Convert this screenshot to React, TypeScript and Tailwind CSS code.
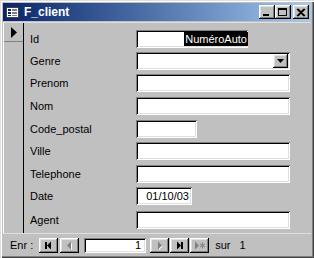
import React from 'react';

const raised =
  'bg-[#c0c0c0] shadow-[inset_-1px_-1px_0_#000,inset_1px_1px_0_#fff,inset_-2px_-2px_0_#808080,inset_2px_2px_0_#dfdfdf]';
const sunken =
  'bg-white shadow-[inset_1px_1px_0_#808080,inset_-1px_-1px_0_#fff,inset_2px_2px_0_#000,inset_-2px_-2px_0_#dfdfdf]';

function TitleButton({ kind }: { kind: 'min' | 'max' | 'close' }) {
  return (
    <div className={`w-[16px] h-[14px] flex items-center justify-center ${raised}`}>
      <svg width="10" height="9" viewBox="0 0 10 9">
        {kind === 'min' && <rect x="1" y="6" width="6" height="2" fill="#000" />}
        {kind === 'max' && (
          <>
            <rect x="0.5" y="0.5" width="8" height="7" fill="none" stroke="#000" />
            <rect x="0" y="0" width="9" height="2" fill="#000" />
          </>
        )}
        {kind === 'close' && (
          <path d="M1 1 L8 8 M8 1 L1 8 M2 1 L9 8 M9 1 L2 8" stroke="#000" strokeWidth="1.2" />
        )}
      </svg>
    </div>
  );
}

function NavButton({ icon, disabled }: { icon: 'first' | 'prev' | 'next' | 'last' | 'new'; disabled?: boolean }) {
  const c = disabled ? '#808080' : '#000';
  return (
    <div className={`w-[19px] h-[15px] flex items-center justify-center ${raised}`}>
      <svg width="13" height="9" viewBox="0 0 13 9">
        {disabled && icon === 'prev' && <path d="M8 1 L8 8 L4.5 4.5 Z" fill="#fff" transform="translate(1,1)" />}
        {disabled && icon === 'next' && <path d="M5 1 L5 8 L8.5 4.5 Z" fill="#fff" transform="translate(1,1)" />}
        {icon === 'first' && (
          <>
            <rect x="3" y="1" width="2" height="7" fill={c} />
            <path d="M9 0.5 L9 8.5 L5 4.5 Z" fill={c} />
          </>
        )}
        {icon === 'prev' && <path d="M8 0.5 L8 8.5 L4 4.5 Z" fill={c} />}
        {icon === 'next' && <path d="M5 0.5 L5 8.5 L9 4.5 Z" fill={c} />}
        {icon === 'last' && (
          <>
            <path d="M4 0.5 L4 8.5 L8 4.5 Z" fill={c} />
            <rect x="8" y="1" width="2" height="7" fill={c} />
          </>
        )}
        {icon === 'new' && (
          <>
            <path d="M2 0.5 L2 8.5 L6 4.5 Z" fill={c} />
            <path d="M9.5 1.5 L9.5 7.5 M7 3 L12 6 M12 3 L7 6" stroke={c} strokeWidth="1" />
          </>
        )}
      </svg>
    </div>
  );
}

const rows: { label: string; w: string; h: string; kind?: 'auto' | 'combo' | 'date' }[] = [
  { label: 'Id', w: 'w-[112px]', h: 'h-[22px]', kind: 'auto' },
  { label: 'Genre', w: 'w-[154px]', h: 'h-[22px]', kind: 'combo' },
  { label: 'Prenom', w: 'w-[154px]', h: 'h-[23px]' },
  { label: 'Nom', w: 'w-[154px]', h: 'h-[23px]' },
  { label: 'Code_postal', w: 'w-[61px]', h: 'h-[23px]' },
  { label: 'Ville', w: 'w-[154px]', h: 'h-[23px]' },
  { label: 'Telephone', w: 'w-[154px]', h: 'h-[22px]' },
  { label: 'Date', w: 'w-[56px]', h: 'h-[24px]', kind: 'date' },
  { label: 'Agent', w: 'w-[154px]', h: 'h-[22px]' },
];

export default function App() {
  return (
    <div className="w-[314px] h-[258px] bg-[#c0c0c0] p-[3px] flex flex-col text-black text-[11px] font-['Liberation_Sans',Arial,sans-serif] shadow-[inset_1px_1px_0_#dfdfdf,inset_2px_2px_0_#fff,inset_-1px_-1px_0_#404040,inset_-2px_-2px_0_#808080]">
      {/* title bar */}
      <div className="h-[18px] flex items-center pl-[3px] pr-[2px] bg-gradient-to-r from-[#0a246a] to-[#a6caf0]">
        <svg width="13" height="11" viewBox="0 0 13 11" className="mr-[5px]">
          <rect x="0.5" y="0.5" width="12" height="10" fill="#fff" stroke="#404040" />
          <rect x="2" y="2" width="3" height="2" fill="#0a246a" />
          <rect x="6" y="2" width="5" height="2" fill="#808080" />
          <rect x="2" y="5" width="3" height="2" fill="#0a246a" />
          <rect x="6" y="5" width="5" height="2" fill="#808080" />
          <rect x="2" y="8" width="3" height="1" fill="#0a246a" />
          <rect x="6" y="8" width="5" height="1" fill="#808080" />
        </svg>
        <span className="text-white font-bold text-[12px] leading-none">F_client</span>
        <div className="ml-auto flex items-center">
          <TitleButton kind="min" />
          <TitleButton kind="max" />
          <div className="w-[2px]" />
          <TitleButton kind="close" />
        </div>
      </div>

      {/* form area */}
      <div className="mt-[1px] h-[211px] flex border-t border-[#dfdfdf]">
        <div className="w-[21px] border-l border-white border-r border-r-black flex flex-col">
          <div className="h-[19px] flex items-center justify-center border-b border-[#808080]">
            <svg width="6" height="11" viewBox="0 0 6 11">
              <path d="M0 0 L6 5.5 L0 11 Z" fill="#000" />
            </svg>
          </div>
        </div>
        <div className="flex-1 pt-[7px] pl-[6px] flex flex-col">
          {rows.map((r) => (
            <div key={r.label} className={`flex items-start ${r.h}`}>
              <div className="w-[106px] h-[18px] leading-[18px] whitespace-nowrap">{r.label}</div>
              <div className={`relative h-[18px] ${r.w} ${sunken} flex items-center`}>
                {r.kind === 'auto' && (
                  <span className="ml-auto bg-black text-white leading-[14px] px-[1px]">NuméroAuto</span>
                )}
                {r.kind === 'date' && <span className="ml-auto mr-[3px] leading-[14px]">01/10/03</span>}
                {r.kind === 'combo' && (
                  <div className={`ml-auto mr-[2px] w-[15px] h-[14px] flex items-center justify-center ${raised}`}>
                    <svg width="7" height="4" viewBox="0 0 7 4">
                      <path d="M0 0 L7 0 L3.5 4 Z" fill="#000" />
                    </svg>
                  </div>
                )}
              </div>
            </div>
          ))}
        </div>
      </div>

      {/* navigation bar */}
      <div className="flex-1 flex items-center pt-[2px] pl-[7px] border-t border-[#dfdfdf]">
        <span className="mr-[6px]">Enr :</span>
        <NavButton icon="first" />
        <div className="w-[2px]" />
        <NavButton icon="prev" disabled />
        <div className={`ml-[5px] mr-[4px] w-[62px] h-[15px] ${sunken} flex items-center justify-end pr-[5px] leading-none`}>1</div>
        <NavButton icon="next" disabled />
        <div className="w-[1px]" />
        <NavButton icon="last" />
        <div className="w-[1px]" />
        <NavButton icon="new" disabled />
        <span className="ml-[6px]">sur</span>
        <span className="ml-[9px]">1</span>
      </div>
    </div>
  );
}
